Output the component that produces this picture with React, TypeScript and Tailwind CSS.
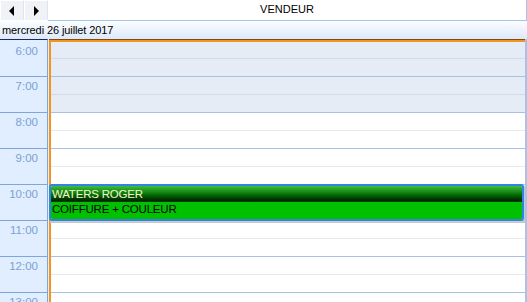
import React from 'react';

const hours = ['6:00', '7:00', '8:00', '9:00', '10:00', '11:00', '12:00', '13:00'];

const NavButton: React.FC<{ dir: 'left' | 'right' }> = ({ dir }) => (
    <button className="w-[24px] h-[20px] bg-[#f0f2f5] border-t border-l border-white border-r border-r-[#dbe6f4] flex items-center justify-center">
        <svg width="6" height="10" viewBox="0 0 6 10">
            {dir === 'left' ? <polygon points="5,0 5,10 0,5" fill="#000" /> : <polygon points="1,0 1,10 6,5" fill="#000" />}
        </svg>
    </button>
);

export default function App() {
    return (
        <div className="w-[527px] h-[302px] overflow-hidden bg-white text-[11px] text-black flex flex-col" style={{ fontFamily: '"Liberation Sans", Arial, sans-serif' }}>
            {/* Header with navigation and resource name */}
            <div className="h-[21px] flex shrink-0">
                <div className="flex w-[48px] shrink-0">
                    <NavButton dir="left" />
                    <NavButton dir="right" />
                </div>
                <div className="flex-1 flex items-center justify-center border-b border-[#a7c3e6] border-r border-r-[#a7c3e6] pb-[1px]">
                    VENDEUR
                </div>
            </div>

            {/* Date row */}
            <div className="h-[18px] shrink-0 bg-gradient-to-b from-[#fbfdff] to-[#dde9fa] flex items-center pl-[2px] text-[11px] tracking-[-0.1px]">
                mercredi 26 juillet 2017
            </div>

            {/* Day grid */}
            <div className="flex flex-1 min-h-0">
                <div className="w-[48px] shrink-0 bg-[#e0eeff] border-r border-[#7ea6dc] border-t border-t-[#1b2c58] pt-[2px]">
                    {hours.map((h, i) => (
                        <div key={h} className={`${i === 0 ? 'h-[35px]' : 'h-[36px]'} border-b border-[#7ea6dc] text-right pr-[9px] pt-[3px] text-[#7d9fd3] text-[11.5px] leading-[13px]`}>
                            {h}
                        </div>
                    ))}
                </div>
                <div className="w-px shrink-0 bg-[#e3eefb]" />
                <div className="flex-1 flex flex-col border-t border-[#7a4d12]">
                    <div className="h-[2px] bg-[#f2941e] shrink-0" />
                    <div className="flex flex-1 min-h-0">
                        <div className="w-[2px] bg-[#f2941e] shrink-0" />
                        <div className="flex-1">
                            {hours.map((h, i) => {
                                const off = i < 2;
                                return (
                                    <div key={h} className={`relative ${i === 0 ? 'h-[35px]' : 'h-[36px]'} border-b border-[#a9c0e2] flex flex-col ${off ? 'bg-[#e6ecf6]' : 'bg-white'}`}>
                                        <div className={`${i === 0 ? 'h-[17px]' : 'h-[18px]'} border-b ${off ? 'border-[#d2dbea]' : 'border-[#e4e8ef]'}`} />
                                        {h === '10:00' && (
                                            <div className="absolute -top-px -left-[2px] right-px h-[37px] z-10 shadow-[1px_2px_0_#c9c9c9]">
                                                <div className="h-full rounded-[3px] border-2 border-[#3383e2] overflow-hidden flex flex-col">
                                                    <div className="h-[16px] bg-gradient-to-b from-[#3cbf3c] via-[#0a7a0a] to-[#002200] text-[#f4f8c8] pl-[1px] leading-[16px] text-[11.5px] tracking-[-0.2px] border-b border-[#013a01]">
                                                        WATERS ROGER
                                                    </div>
                                                    <div className="flex-1 bg-[#00c000] text-black pl-[1px] leading-[15px] text-[11.5px] tracking-[-0.2px]">
                                                        COIFFURE + COULEUR
                                                    </div>
                                                </div>
                                            </div>
                                        )}
                                    </div>
                                );
                            })}
                        </div>
                    </div>
                </div>
                <div className="w-[2px] shrink-0 bg-[#a7c3e6]" />
            </div>
        </div>
    );
}
